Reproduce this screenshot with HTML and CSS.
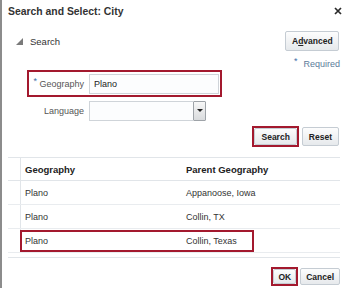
FILE: index.html
```html
<!DOCTYPE html>
<html lang="en">
<head>
  <meta charset="UTF-8" />
  <title>Search and Select: City</title>
  <link rel="stylesheet" href="styles.css">
</head>
<body>
  <div class="dlg">
    <div class="head">
      <span class="title">Search and Select: City</span>
      <svg class="close" width="8" height="8" viewBox="0 0 8 8"><path d="M1 1L7 7M7 1L1 7" stroke="#2b2b2b" stroke-width="1.7"/></svg>
    </div>

    <div class="sbar">
      <div class="stitle"><span class="tri"></span>Search</div>
      <button class="btn adv">A<u>d</u>vanced</button>
    </div>
    <div class="req"><span class="star">*</span>Required</div>

    <div class="frow mark">
      <label class="lbl"><span class="star">*</span> Geography</label>
      <input class="inp" value="Plano">
    </div>
    <div class="frow">
      <label class="lbl">Language</label>
      <span class="sel"><span class="sel-box"></span><span class="sel-btn"><span class="caret"></span></span></span>
    </div>

    <div class="acts">
      <span class="hl"><button class="btn">Search</button></span>
      <button class="btn">Reset</button>
    </div>

    <div class="grid">
      <div class="trow thead"><span class="c0"></span><span class="c1">Geography</span><span class="c2">Parent Geography</span></div>
      <div class="trow"><span class="c0"></span><span class="c1">Plano</span><span class="c2">Appanoose, Iowa</span></div>
      <div class="trow"><span class="c0"></span><span class="c1">Plano</span><span class="c2">Collin, TX</span></div>
      <div class="trow"><span class="c0"></span><span class="c1">Plano</span><span class="c2">Collin, Texas</span></div>
      <div class="row-mark"></div>
    </div>

    <div class="foot">
      <span class="hl"><button class="btn sm ok">OK</button></span>
      <button class="btn sm">Cancel</button>
    </div>
  </div>
</body>
</html>
```

FILE: styles.css
```css
*,*::before,*::after{box-sizing:border-box;margin:0;padding:0}
body{font-family:"Liberation Sans",Arial,sans-serif;color:#333;background:#fff}
.dlg{width:350px;height:288px;border-left:2px solid #8c8c8c;padding:0 10px 0 6px;background:#fff}

.head{height:22px;display:flex;align-items:center;justify-content:space-between}
.title{font-size:10.4px;font-weight:bold;color:#333}
.close{margin-right:-2px}

.sbar{margin-top:9px;height:20px;display:flex;align-items:center;justify-content:space-between}
.stitle{display:flex;align-items:center;gap:7px;padding-left:8px;font-size:9.5px;color:#333}
.tri{width:0;height:0;border-left:7px solid transparent;border-bottom:7px solid #7a7a7a;margin-top:1px}

.btn{height:19px;padding:0 6px;font:bold 8.5px "Liberation Sans",Arial,sans-serif;color:#222;background:linear-gradient(#fdfdfd,#e6e9ec);border:1px solid #c5ccd3;border-radius:2px}
.btn.adv{height:20px;width:54px;margin-right:1px}
.btn.sm{height:17px;padding:0 5px}
.btn.ok{height:15px;padding:0 4px}

.req{margin-top:6px;height:13px;display:flex;align-items:center;justify-content:flex-end;gap:6px;font-size:9px;color:#5b7b9a}
.star{color:#3f6fa8;font-size:9px;position:relative;top:-3px}

.frow{margin-left:19px;width:195px;height:27px;border:2px solid transparent;display:flex;align-items:center}
.frow.mark{border-color:#a3192e}
.lbl{width:55px;margin-right:5px;text-align:right;font-size:9px;color:#555;white-space:nowrap}
.lbl .star{top:-3px}
.inp{width:130px;height:20px;border:1px solid #cfd4d9;background:#fcfdfe;padding:0 4px;font:9px "Liberation Sans",Arial,sans-serif;color:#222;outline:none}

.sel{display:flex;height:20px}
.sel-box{width:104px;border:1px solid #cfd4d9;border-right:none;background:#fcfdfe}
.sel-btn{width:13px;border:1px solid #9ea3a8;border-radius:1px;background:linear-gradient(#f7f7f7,#d9dbdd);display:flex;align-items:center;justify-content:center}
.caret{width:0;height:0;border-left:3px solid transparent;border-right:3px solid transparent;border-top:3px solid #222}

.acts{margin-top:2px;height:21px;display:flex;justify-content:flex-end;align-items:center;gap:3px;padding-right:1px}
.hl{display:flex;border:2px solid #a3192e}
.hl .btn{height:17px}
.hl .btn.ok{height:15px}

.grid{margin-top:10px;position:relative;padding-bottom:4px;border-bottom:1px solid #e1e5e9}
.trow{display:grid;grid-template-columns:13px 160px 1fr;height:24px;border-bottom:1px solid #e9ecef;font-size:9px;color:#333}
.trow.thead{border-top:1px solid #e1e5e9;border-bottom-color:#e1e5e9;font-size:9.5px;font-weight:bold;color:#222}
.trow span{display:flex;align-items:center}
.c0{border-right:1px solid #e1e5e9}
.c1{padding-left:4px}
.c2{padding-left:5px}
.row-mark{position:absolute;left:12px;top:73px;width:234px;height:22px;border:2px solid #a3192e}

.foot{margin-top:9px;height:19px;display:flex;justify-content:flex-end;align-items:center;gap:2px}
```
